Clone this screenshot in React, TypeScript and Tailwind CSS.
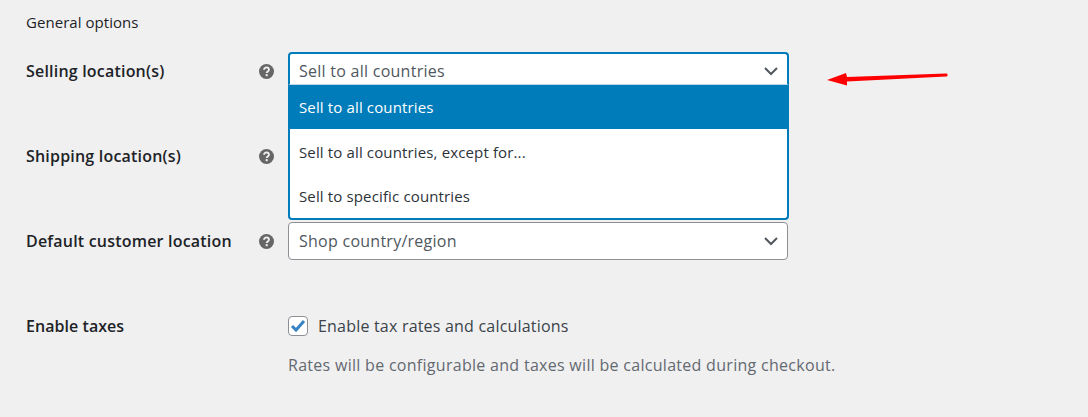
import React from 'react';

const font = "font-['Open_Sans','Noto_Sans',sans-serif]";

const HelpIcon = () => (
    <svg width="15" height="15" viewBox="0 0 16 16" className="shrink-0">
        <circle cx="8" cy="8" r="8" fill="#666666" />
        <path d="M5.4 6.2a2.6 2.6 0 0 1 5.2 0c0 1.7-2.4 1.900-2.400 3.400" fill="none" stroke="#f0f0f1" strokeWidth="2" />
        <rect x="7.100" y="10.800" width="2.200" height="2.200" fill="#f0f0f1" />
    </svg>
);

const Chevron = () => (
    <svg width="16" height="10" viewBox="0 0 16 10" className="shrink-0">
        <path d="M2 2l6 6 6-6" fill="none" stroke="#50575e" strokeWidth="2" />
    </svg>
);

const Label = ({ text }: { text: string }) => (
    <div className="flex w-[262px] shrink-0 items-center justify-between pr-[14px]">
        <span className="text-[16px] font-semibold tracking-[0.2px] text-[#1d2327]">{text}</span>
        <HelpIcon />
    </div>
);

const options = ['Sell to all countries', 'Sell to all countries, except for...', 'Sell to specific countries'];

const App: React.FC = () => {
    return (
        <div className={`h-[417px] w-[1088px] overflow-hidden bg-[#f0f0f1] pl-[26px] pt-[13px] ${font}`}>
            <div className="h-[19px] text-[15px] leading-[19px] tracking-[0.05px] text-[#1d2327]">General options</div>

            <div className="mt-[20px] flex h-[38px] items-center">
                <Label text="Selling location(s)" />
                <div className="relative h-[38px] w-[501px]">
                    <div className="flex h-[33px] items-center justify-between rounded-t-[4px] border-2 border-b border-[#007cba] border-b-[#bcd6e6] bg-white pl-[9px] pr-[8px] pt-[4px] text-[16px] tracking-[0.26px] text-[#50575e]">
                        <span>Sell to all countries</span>
                        <Chevron />
                    </div>
                    <div className="absolute left-0 top-[33px] z-10 w-[501px] rounded-b-[4px] border-2 border-t-0 border-[#007cba] bg-white">
                        {options.map((o, i) => (
                            <div
                                key={o}
                                className={`flex h-[44.4px] items-center pl-[9px] pt-px text-[15px] tracking-[0.14px] ${i === 0 ? 'bg-[#007cba] text-white' : 'text-[#2c3338]'}`}
                            >
                                {o}
                            </div>
                        ))}
                    </div>
                    <svg width="122" height="16" viewBox="0 0 122 16" className="absolute left-[539px] top-[19px]">
                        <path d="M0 9L19 2l1 4 99-3.500a1.500 1.500 0 0 1 .2 3L20 10.500l0 4z" fill="#ff0000" />
                    </svg>
                </div>
            </div>

            <div className="mt-[47px] flex h-[38px] items-center">
                <Label text="Shipping location(s)" />
            </div>

            <div className="mt-[47px] flex h-[38px] items-center">
                <Label text="Default customer location" />
                <div className="flex h-[38px] w-[500px] items-center justify-between rounded-[4px] border border-[#8c8f94] bg-white pl-[10px] pr-[8px] text-[16px] tracking-[0.26px] text-[#50575e]">
                    <span>Shop country/region</span>
                    <Chevron />
                </div>
            </div>

            <div className="mt-[56px] flex h-[20px] items-center">
                <span className="w-[262px] shrink-0 text-[16px] font-semibold tracking-[0.05px] text-[#1d2327]">Enable taxes</span>
                <div className="flex h-[20px] w-[20px] items-center justify-center rounded-[4px] border border-[#8c8f94] bg-white">
                    <svg width="16" height="14" viewBox="0 0 16 14">
                        <path d="M2 7l4 4L14 2" fill="none" stroke="#3582c4" strokeWidth="3" />
                    </svg>
                </div>
                <span className="ml-[10px] text-[16px] tracking-[0.2px] text-[#3c434a]">Enable tax rates and calculations</span>
            </div>

            <div className="ml-[262px] mt-[18px] text-[16px] leading-[22px] tracking-[0.29px] text-[#646970]">
                Rates will be configurable and taxes will be calculated during checkout.
            </div>
        </div>
    );
};

export default App;
